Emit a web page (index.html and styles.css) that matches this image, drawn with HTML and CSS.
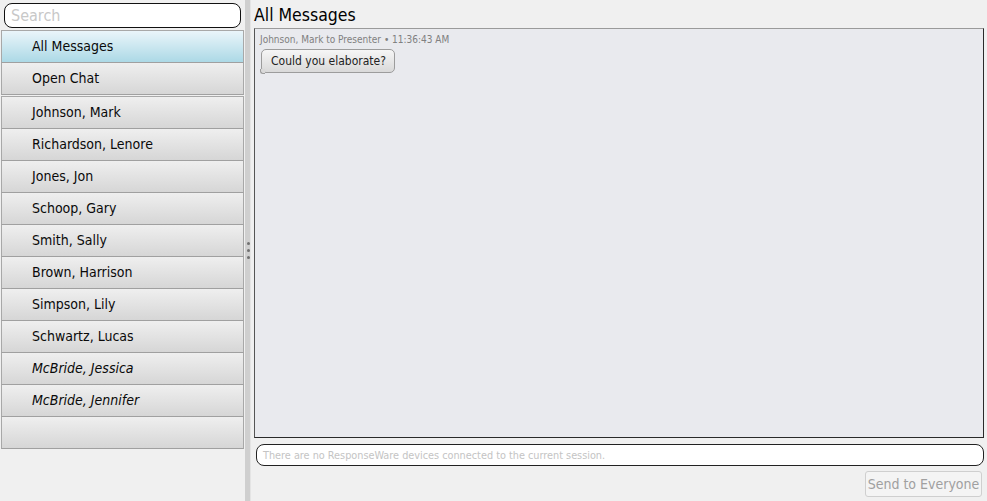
FILE: index.html
```html
<!DOCTYPE html>
<html>
<head>
<meta charset="utf-8">
<link rel="stylesheet" href="styles.css">
</head>
<body>
<div class="app">
  <div class="left">
    <div class="search"><span class="ph">Search</span></div>
    <div class="group">
      <div class="item sel">All Messages</div>
      <div class="item">Open Chat</div>
    </div>
    <div class="group second">
      <div class="item">Johnson, Mark</div>
      <div class="item">Richardson, Lenore</div>
      <div class="item">Jones, Jon</div>
      <div class="item">Schoop, Gary</div>
      <div class="item">Smith, Sally</div>
      <div class="item">Brown, Harrison</div>
      <div class="item">Simpson, Lily</div>
      <div class="item">Schwartz, Lucas</div>
      <div class="item off">McBride, Jessica</div>
      <div class="item off">McBride, Jennifer</div>
      <div class="item"></div>
    </div>
  </div>
  <div class="splitter"><div class="strip"><span class="dot"></span><span class="dot"></span><span class="dot"></span></div></div>
  <div class="right">
    <div class="title">All Messages</div>
    <div class="messages">
      <div class="meta">Johnson, Mark to Presenter • 11:36:43 AM</div>
      <div class="bubble">Could you elaborate?</div>
    </div>
    <div class="entry"><span class="ph2">There are no ResponseWare devices connected to the current session.</span></div>
    <div class="actions"><div class="send">Send to Everyone</div></div>
  </div>
</div>
</body>
</html>
```
FILE: styles.css
```css
html, body {
  margin: 0;
  padding: 0;
  background: #f0f0f0;
  font-family: "DejaVu Sans", "Liberation Sans", sans-serif;
  font-stretch: condensed;
  color: #111;
}
.app {
  display: flex;
  width: 987px;
  height: 501px;
  overflow: hidden;
}
.left {
  width: 244px;
  padding-top: 3px;
  box-sizing: border-box;
}
.search {
  margin-left: 4px;
  width: 237px;
  height: 25px;
  box-sizing: border-box;
  border: 1px solid #111;
  border-radius: 8px;
  background: #fff;
  display: flex;
  align-items: center;
  padding-left: 6px;
}
.ph {
  color: #c8c8c8;
  font-size: 16px;
}
.group {
  margin-top: 2px;
  margin-left: 1px;
  width: 243px;
  border-top: 1px solid #a8a8a8;
}
.group.second {
  margin-top: 1px;
}
.item {
  box-sizing: border-box;
  border-left: 1px solid #a8a8a8;
  border-right: 1px solid #a8a8a8;
  border-bottom: 1px solid #a0a0a0;
  height: 32px;
  background: linear-gradient(#efefef, #d6d6d6);
  font-size: 14px;
  line-height: 31px;
  padding-left: 30px;
  color: #0a0a0a;
}
.item.sel {
  background: linear-gradient(#eaf5fa, #acd9e6);
}
.item.off {
  font-style: italic;
}
.splitter {
  width: 7px;
  display: flex;
  justify-content: flex-start;
}
.strip {
  margin-left: 1px;
  width: 5px;
  background: #cfcfcf;
  border-right: 1px solid #e4e4e4;
  display: flex;
  flex-direction: column;
  align-items: flex-end;
  justify-content: center;
  gap: 4px;
}
.dot {
  width: 3px;
  height: 3px;
  border-radius: 50%;
  background: #707070;
}
.right {
  flex: 1;
  display: flex;
  flex-direction: column;
  padding-left: 3px;
  padding-right: 3px;
}
.title {
  height: 28px;
  font-size: 17.5px;
  line-height: 30px;
  color: #000;
  box-sizing: border-box;
}
.messages {
  height: 410px;
  box-sizing: border-box;
  background: #e9eaee;
  border: 1px solid #2a2a2a;
  border-top-color: #9a9a9a;
  border-left-color: #555;
  padding: 5px 5px;
}
.meta {
  font-size: 10px;
  color: #808080;
}
.bubble {
  position: relative;
  display: inline-block;
  margin-top: 4px;
  margin-left: 1px;
  height: 24px;
  box-sizing: border-box;
  padding: 0 8px 0 9px;
  line-height: 22px;
  font-size: 12px;
  color: #222;
  background: linear-gradient(#f6f6f6, #d9d9d9);
  border: 1px solid #9c9c9c;
  border-radius: 5px;
}
.bubble::after {
  content: "";
  position: absolute;
  left: -2px;
  bottom: -2px;
  width: 4px;
  height: 4px;
  background: #d9d9d9;
  border-left: 1px solid #9c9c9c;
  border-bottom: 1px solid #9c9c9c;
  border-bottom-left-radius: 3px;
}
.entry {
  margin-top: 6px;
  margin-left: 2px;
  height: 22px;
  box-sizing: border-box;
  border: 1px solid #222;
  border-radius: 8px;
  background: #fff;
  display: flex;
  align-items: center;
  padding-left: 6px;
}
.ph2 {
  font-size: 10.8px;
  color: #c4c4c4;
}
.actions {
  display: flex;
  justify-content: flex-end;
  margin-top: 5px;
  padding-right: 2px;
}
.send {
  width: 117px;
  height: 26px;
  box-sizing: border-box;
  border: 1px solid #cfcfcf;
  border-radius: 3px;
  background: #f4f4f4;
  color: #a0a0a0;
  font-size: 14px;
  line-height: 24px;
  text-align: center;
}
```
